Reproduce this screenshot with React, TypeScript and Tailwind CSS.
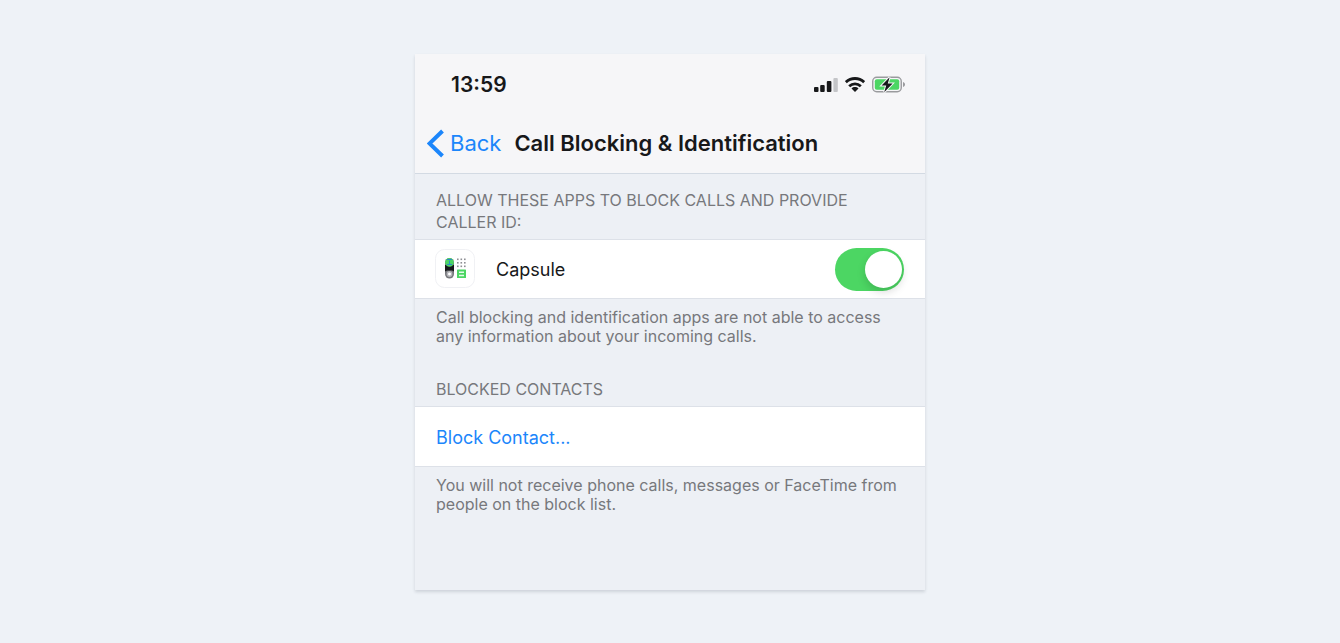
import React, { useState } from 'react';

const SignalIcon: React.FC = () => (
  <svg width="24" height="14" viewBox="0 0 24 14" aria-hidden="true">
    <rect x="0" y="9" width="4.5" height="5" rx="1" fill="#17181a" />
    <rect x="6.2" y="7" width="4.5" height="7" rx="1" fill="#17181a" />
    <rect x="12.8" y="3" width="4.6" height="11" rx="1" fill="#17181a" />
    <rect x="19.4" y="0" width="4.4" height="14" rx="1" fill="#c4c5c8" />
  </svg>
);

const WifiIcon: React.FC = () => (
  <svg width="20" height="15" viewBox="0 0 20 15" aria-hidden="true" fill="none" stroke="#17181a">
    <path d="M.8 5.2C6 .4 14 .4 19.2 5.2" strokeWidth="3" />
    <path d="M4.2 9.2C7.6 6.1 12.4 6.1 15.8 9.2" strokeWidth="2.9" />
    <path d="M10 15l-3.5-3.6c1.8-1.8 5.2-1.8 7 0z" fill="#17181a" stroke="none" />
  </svg>
);

const BatteryIcon: React.FC = () => (
  <svg width="33" height="17" viewBox="0 0 33 17" aria-hidden="true">
    <rect x="0.75" y="1.25" width="28.5" height="14.5" rx="4" fill="#f6f6f8" stroke="#9a9b9e" strokeWidth="1.4" />
    <rect x="2.8" y="3.2" width="24.4" height="10.6" rx="2" fill="#4cd663" />
    <path d="M31 6c1.6.6 2 1.6 2 2.5s-.4 1.9-2 2.5z" fill="#9a9b9e" />
    <path
      d="M17.6 1.2L9.6 9.6h4.6l-2 6.6 8.4-8.8h-4.8z"
      fill="#17181a"
      stroke="#f6f6f8"
      strokeWidth="2"
      paintOrder="stroke"
    />
  </svg>
);

const CapsuleIcon: React.FC = () => (
  <svg width="40" height="40" viewBox="0 0 40 40" aria-hidden="true">
    <rect x="0.5" y="0.5" width="39" height="38" rx="9" fill="#fff" stroke="#f0f1f4" />
    <rect x="10" y="9" width="9" height="20.5" rx="4.5" fill="#77787c" />
    <path d="M10 16h9v6.5l-2-1h-5l-2 1z" fill="#17181a" />
    <circle cx="14.5" cy="13.4" r="4.3" fill="#4cd663" />
    <path d="M12 10.5h5M14.5 11.5v4M12 15.5h5" stroke="#2b8cc4" strokeWidth="1.1" />
    <circle cx="14.5" cy="25" r="2.2" fill="#fff" stroke="#b5b6ba" strokeWidth="1.4" />
    <g fill="#8e8f94">
      {[9.5, 13, 16.5].map((y) =>
        [22, 25.5, 29].map((x) => <rect key={`${x}-${y}`} x={x} y={y} width="1.6" height="1.6" />)
      )}
    </g>
    <rect x="22" y="20.5" width="9" height="8.5" rx="0.6" fill="#4cd663" />
    <path d="M24 23.2h5M24 26.4h5" stroke="#e4faea" strokeWidth="1.5" />
  </svg>
);

interface NoteProps {
  children: React.ReactNode;
}

const SectionTitle: React.FC<NoteProps> = ({ children }) => (
  <h2 className="px-[21px] pb-[6px] text-base leading-[22px] uppercase text-[#77787c]">{children}</h2>
);

const SectionNote: React.FC<NoteProps> = ({ children }) => (
  <p className="px-[21px] pt-[9px] text-base leading-[19px] text-[#77787c]">{children}</p>
);

const App: React.FC = () => {
  const [enabled, setEnabled] = useState(true);

  return (
    <div className="min-h-screen bg-[#eef2f7] px-4 py-[54px] font-['Inter','Liberation_Sans',sans-serif]">
      <main className="mx-auto w-full max-w-[510px] bg-[#edf0f5] pb-[76px] shadow-[0_2px_3px_rgba(40,50,70,0.16)]">
        <header className="border-b border-[#d3dae3] bg-[#f6f6f8]">
          <div className="flex h-[61px] items-center justify-between pr-5 pl-9">
            <span className="text-[21px] font-semibold text-[#17181a]">13:59</span>
            <div className="flex items-center gap-[7px]">
              <SignalIcon />
              <WifiIcon />
              <BatteryIcon />
            </div>
          </div>
          <nav className="flex h-[58px] items-center gap-[13px] pb-[2px] pl-3">
            <button type="button" className="flex items-center gap-[5px] text-[22px] text-[#1c86fb]">
              <svg width="18" height="30" viewBox="0 0 18 30" aria-hidden="true" fill="none">
                <path d="M15.5 3L2.5 15.5l13 12.5" stroke="currentColor" strokeWidth="4" />
              </svg>
              Back
            </button>
            <h1 className="text-[22px] font-semibold whitespace-nowrap text-[#17181a]">
              Call Blocking &amp; Identification
            </h1>
          </nav>
        </header>

        <section className="pt-[15px]">
          <SectionTitle>Allow these apps to block calls and provide caller ID:</SectionTitle>
          <div className="flex h-[60px] items-center border-y border-[#dde1e8] bg-white pr-[21px] pl-5">
            <CapsuleIcon />
            <label htmlFor="capsule" className="ml-[21px] flex-1 pt-[2px] text-lg text-[#17181a]">
              Capsule
            </label>
            <input
              id="capsule"
              type="checkbox"
              role="switch"
              checked={enabled}
              onChange={(e) => setEnabled(e.target.checked)}
              className="h-[43px] w-[69px] cursor-pointer appearance-none rounded-full bg-gray-200 p-[3px] before:block before:size-[37px] before:rounded-full before:bg-white before:shadow-[0_4px_8px_rgba(0,0,0,0.15)] checked:bg-[#4cd663] checked:before:ml-[27px]"
            />
          </div>
          <SectionNote>
            Call blocking and identification apps are not able to access any information about your incoming calls.
          </SectionNote>
        </section>

        <section className="pt-8">
          <SectionTitle>Blocked contacts</SectionTitle>
          <button
            type="button"
            className="flex h-[61px] w-full items-center border-y border-[#dde1e8] bg-white px-[21px] pt-[2px] text-lg text-[#1c86fb]"
          >
            Block Contact...
          </button>
          <SectionNote>
            You will not receive phone calls, messages or FaceTime from people on the block list.
          </SectionNote>
        </section>
      </main>
    </div>
  );
};

export default App;
